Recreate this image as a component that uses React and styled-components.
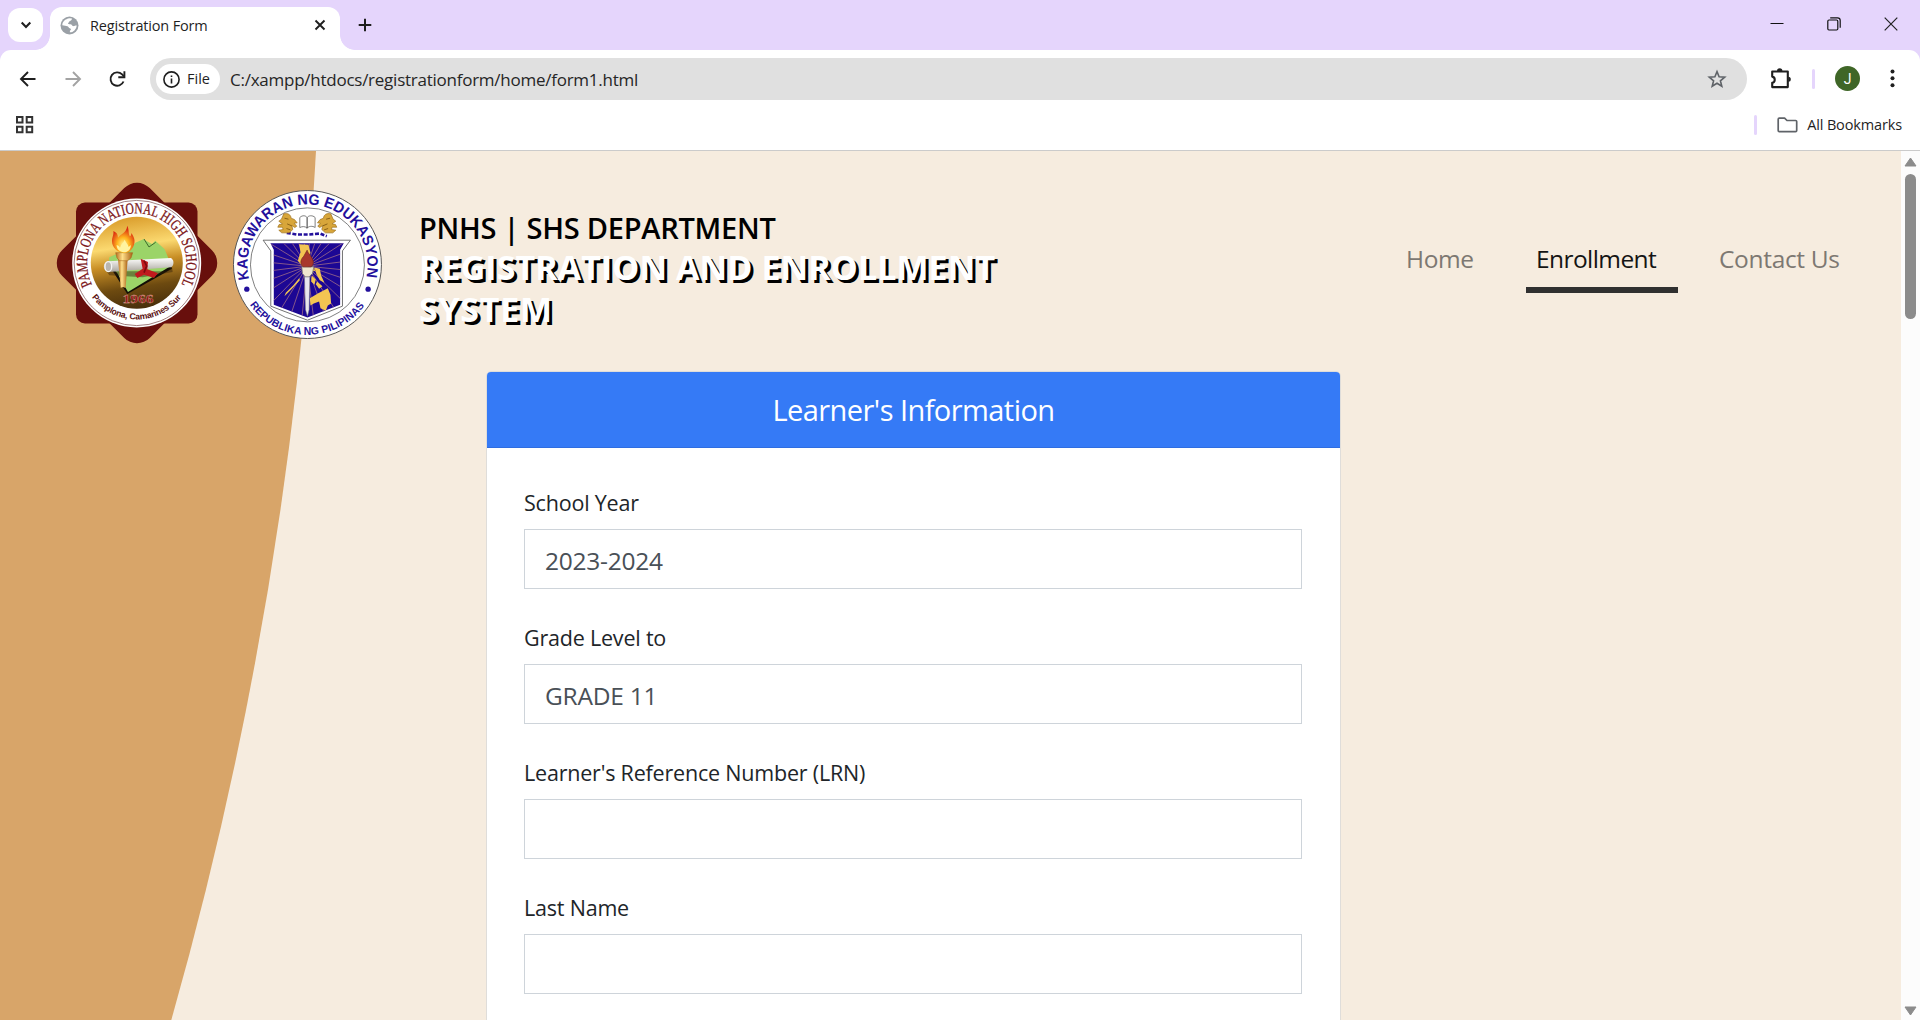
import React from "react";
import styled, { createGlobalStyle } from "styled-components";

const GlobalStyle = createGlobalStyle`
  *, *::before, *::after { box-sizing: border-box; }
  body {
    margin: 0;
    background: #fff;
    overflow: hidden;
    font-family: "Open Sans", "Noto Sans", sans-serif;
  }
`;

/* ---------- browser chrome ---------- */

const BrowserWindow = styled.div`
  display: flex;
  flex-direction: column;
  width: 1920px;
  height: 1020px;
  overflow: hidden;
  background: #e5d5fc;
`;

const TabStrip = styled.div`
  display: flex;
  align-items: flex-start;
  height: 50px;
  padding: 7px 0 0 8px;
`;

const TabSearch = styled.button`
  display: flex;
  align-items: center;
  justify-content: center;
  width: 35px;
  height: 34px;
  margin: 1px 7px 0 0;
  padding: 0;
  border: 0;
  border-radius: 12px;
  background: #fff;
`;

const Tab = styled.div`
  position: relative;
  display: flex;
  align-items: center;
  width: 290px;
  height: 43px;
  padding: 0 14px 7px 10px;
  border-radius: 12px 12px 0 0;
  background: #fff;

  &::before,
  &::after {
    content: "";
    position: absolute;
    bottom: 0;
    width: 15px;
    height: 15px;
  }
  &::before {
    left: -15px;
    background: radial-gradient(circle at 0 0, transparent 14.5px, #fff 15.2px);
  }
  &::after {
    right: -15px;
    background: radial-gradient(circle at 100% 0, transparent 14.5px, #fff 15.2px);
  }
`;

const TabTitle = styled.span`
  flex: 1;
  margin-left: 11px;
  padding-top: 1px;
  font-size: 14.5px;
  line-height: 20px;
  letter-spacing: -0.17px;
  color: #1f1f1f;
  white-space: nowrap;
`;

const NewTab = styled.div`
  display: flex;
  margin: 11px 0 0 18px;
`;

const WindowControls = styled.div`
  display: flex;
  align-items: center;
  gap: 43px;
  margin: 10px 22px 0 auto;
`;

const Toolbar = styled.div`
  display: flex;
  align-items: center;
  height: 58px;
  padding: 0 25px 0 18px;
  border-radius: 11px 11px 0 0;
  background: #fff;
`;

const NavButtons = styled.div`
  display: flex;
  align-items: center;
  gap: 25px;
  width: 132px;
  padding-bottom: 1px;
`;

const AddressBar = styled.div`
  display: flex;
  align-items: center;
  width: 1597px;
  height: 42px;
  padding: 0 20px 0 6px;
  border-radius: 21px;
  background: #e0e0e0;
`;

const SchemeChip = styled.div`
  display: flex;
  align-items: center;
  gap: 7px;
  width: 64px;
  height: 30px;
  padding-left: 7px;
  border-radius: 15px;
  background: #fff;
  font-size: 14.5px;
  font-weight: 500;
  line-height: 20px;
  color: #1f1f1f;
`;

const Url = styled.span`
  flex: 1;
  margin-left: 10px;
  padding-top: 1px;
  font-size: 17px;
  line-height: 24px;
  letter-spacing: -0.25px;
  color: #262626;
`;

const ToolbarEnd = styled.div`
  display: flex;
  align-items: center;
  gap: 20px;
  margin-left: auto;
  padding-bottom: 1px;
`;

const Divider = styled.span`
  width: 3px;
  height: 20px;
  border-radius: 2px;
  background: #e5d5fc;
`;

const Avatar = styled.span`
  display: flex;
  align-items: center;
  justify-content: center;
  width: 25px;
  height: 25px;
  margin-right: 10px;
  border-radius: 50%;
  background: #3f6627;
  color: #fff;
  font: 14px Roboto, "Open Sans", sans-serif;
`;

const BookmarksBar = styled.div`
  display: flex;
  align-items: center;
  height: 43px;
  padding: 0 18px 9px 15px;
  border-bottom: 1px solid #cbcbcb;
  background: #fff;
`;

const AllBookmarks = styled.div`
  display: flex;
  align-items: center;
  gap: 9px;
  margin-left: auto;
  font-size: 14.5px;
  line-height: 20px;
  letter-spacing: -0.14px;
  color: #1f1f1f;

  svg { margin-left: 11px; }
`;

/* ---------- page ---------- */

const Viewport = styled.div`
  display: flex;
  flex: 1;
  min-height: 0;
`;

const Page = styled.div`
  position: relative;
  flex: 1;
  overflow: hidden;
  background: #f6ecdf;
`;

const Backdrop = styled.svg`
  position: absolute;
  top: 0;
  left: 0;
`;

const Header = styled.header`
  position: relative;
  display: flex;
  align-items: flex-start;
  height: 220px;
  padding: 32px 39px 0 57px;
`;

const Seal = styled.svg`
  flex: none;
  margin: 7px 0 0 16px;
  overflow: visible;
`;

const Badge = styled.svg`
  flex: none;
  overflow: visible;
`;

const Titles = styled.div`
  width: 620px;
  margin: 27px 0 0 37px;
`;

const Department = styled.div`
  font-size: 29px;
  font-weight: 600;
  line-height: 36px;
  letter-spacing: -0.25px;
  color: #000;
`;

const SystemName = styled.div`
  font-size: 34px;
  font-weight: 700;
  line-height: 42px;
  letter-spacing: 0.07px;
  color: #fff;
  text-shadow: 3px 3px 0 #000;
`;

const LastWord = styled.span`
  letter-spacing: 0.7px;
`;

const Nav = styled.nav`
  display: flex;
  gap: 30px;
  margin: 56px 0 0 auto;
`;

const NavLink = styled.a`
  width: ${(p) => p.$width}px;
  padding: 0 0 8px ${(p) => (p.$active ? 10 : 11)}px;
  border-bottom: 6px solid ${(p) => (p.$active ? "#303030" : "transparent")};
  font-size: 24.5px;
  line-height: 40px;
  letter-spacing: ${(p) => p.$tracking}px;
  color: ${(p) => (p.$active ? "#141414" : "#7d7872")};
  white-space: nowrap;
`;

const Card = styled.section`
  position: relative;
  width: 855px;
  height: 900px;
  margin-left: 486px;
  border: 1px solid #dfddda;
  border-radius: 5px;
  background: #fff;
`;

const CardHeader = styled.h1`
  margin: 0;
  height: 76px;
  border-bottom: 1px solid #2f6de0;
  border-radius: 4px 4px 0 0;
  background: #357af6;
  color: #fff;
  font-size: 29px;
  font-weight: 400;
  line-height: 75px;
  letter-spacing: -0.56px;
  text-align: center;
`;

const Fields = styled.form`
  display: flex;
  flex-direction: column;
  gap: 33px;
  padding: 39px 38px 0 37px;
`;

const Field = styled.label`
  display: flex;
  flex-direction: column;
  gap: 10px;
  font-size: 21.5px;
  line-height: 32px;
  letter-spacing: -0.2px;
  color: #212529;
`;

const Input = styled.input`
  height: 60px;
  padding: 3px 20px 0;
  border: 1px solid #ced4da;
  border-radius: 0;
  background: #fff;
  font: 24.5px "Open Sans", "Noto Sans", sans-serif;
  letter-spacing: -0.25px;
  color: #495057;
  outline: none;
`;

const ScrollTrack = styled.div`
  display: flex;
  flex-direction: column;
  align-items: center;
  width: 19px;
  padding: 6px 0 4px;
  background: #fcfcfc;
`;

const ScrollThumb = styled.div`
  width: 11px;
  height: 145px;
  margin: 7px 0 auto;
  border-radius: 6px;
  background: #8b8b8b;
`;

/* ---------- icons ---------- */

const Stroke = ({ size = 20, w = 2, color = "#1f1f1f", children, box = 20 }) => (
  <svg width={size} height={size} viewBox={`0 0 ${box} ${box}`} fill="none" stroke={color} strokeWidth={w}>
    {children}
  </svg>
);

const ChevronIcon = () => (
  <Stroke size={12} box={12} w={2.1}><path d="M1.7 3.6 6 7.9l4.3-4.3" /></Stroke>
);
const GlobeIcon = () => (
  <svg width="19" height="19" viewBox="0 0 19 19">
    <circle cx="9.5" cy="9.5" r="9" fill="#9aa0a6" />
    <path fill="#fff" d="M9.600 2.200 12 2.500c-.2 1.600-1 2.200-2.300 2.500-.6.7-.4 1.500-1.600 2-.3 1.200.8 1.300 2.400 1.300 1.400.2 1.300 1.500 2.600 1.800 1.300.3 1.800-.6 3.600-.5-.2 2-.9 3.600-2.300 4.800-1.300 1.300-2.800 1.800-4.500 1.900v-1.600c1.600-.5 1.300-2-.1-2.400-1.200-.3-1.100-1.800-2.300-2.100C5.900 9.900 4.500 9.500 2.300 9.200 2.300 5.900 5 2.800 9.600 2.200z" />
  </svg>
);
const CloseIcon = () => (
  <Stroke size={12} box={12} w={1.9}><path d="m1.500 1.500 9 9m0-9-9 9" /></Stroke>
);
const PlusIcon = () => (
  <Stroke size={14} box={14} w={2}><path d="M7 .7v12.600M.7 7h12.600" /></Stroke>
);
const ArrowIcon = ({ color, flip }) => (
  <Stroke color={color} w={1.9}>
    <path d={flip ? "M2.500 10h14M10 3l7 7-7 7" : "M17.500 10h-14M10 3l-7 7 7 7"} />
  </Stroke>
);
const ReloadIcon = () => (
  <Stroke w={1.9}>
    <path d="M15.500 12.500A6.700 6.700 0 1 1 14.100 5.400L16 7.400" />
    <path d="M16.400 2.200v6.100h-6.100" />
  </Stroke>
);
const InfoIcon = () => (
  <svg width="17" height="17" viewBox="0 0 17 17" fill="none" stroke="#1f1f1f" strokeWidth="1.600">
    <circle cx="8.500" cy="8.500" r="7.600" />
    <path d="M8.500 7.500v5M8.500 4.400v1.700" />
  </svg>
);
const StarIcon = () => (
  <Stroke color="#5f6368" w={1.600}>
    <path d="m10 2.600 2.100 5.200 5.600.4-4.300 3.600 1.400 5.500L10 14.300l-4.800 3 1.400-5.500-4.300-3.600 5.600-.4z" />
  </Stroke>
);
const PuzzleIcon = () => (
  <svg width="22" height="21" viewBox="0 0 22 21">
    <path d="M2.200 3.500h15.600v15.600H2.200v-4.300c3.400-.5 3.400-5.700 0-6.200z" fill="none" stroke="#1f1f1f" strokeWidth="2.100" strokeLinejoin="round" />
    <path d="M7 3a2.700 2.700 0 0 1 5.400 0zM18.300 8.800a2.500 2.500 0 0 1 0 5z" fill="#1f1f1f" />
  </svg>
);
const MenuIcon = () => (
  <svg width="5" height="19" viewBox="0 0 5 19" fill="#1f1f1f">
    <circle cx="2.500" cy="2.500" r="2" /><circle cx="2.500" cy="9.300" r="2" /><circle cx="2.500" cy="16.200" r="2" />
  </svg>
);
const GridIcon = () => (
  <svg width="19" height="19" viewBox="0 0 19 19" fill="none" stroke="#333" strokeWidth="2">
    <path d="M2 2h5.500v5.500H2zM11.700 2h5.500v5.500h-5.500zM2 11.700h5.500v5.500H2zM11.700 11.700h5.500v5.500h-5.500z" />
  </svg>
);
const FolderIcon = () => (
  <svg width="21" height="16" viewBox="0 0 21 16" fill="none" stroke="#5f6368" strokeWidth="1.700" strokeLinejoin="round">
    <path d="M1.200 2.200c0-.7.4-1.100 1.100-1.100h5.300l2.400 2.400h8.600c.7 0 1.100.4 1.100 1.100v9c0 .7-.4 1.100-1.100 1.100H2.300c-.7 0-1.100-.4-1.100-1.100z" />
  </svg>
);

/* ---------- emblems ---------- */

function SchoolBadge() {
  return (
    <Badge width="160" height="160" viewBox="0 0 160 160">
      <defs>
        <linearGradient id="gold" x1="0.300" y1="0" x2="0.450" y2="1">
          <stop offset="0" stopColor="#d99a28" />
          <stop offset="0.330" stopColor="#fbd970" />
          <stop offset="0.520" stopColor="#c98f26" />
          <stop offset="0.780" stopColor="#6d4a10" />
          <stop offset="1" stopColor="#4a300c" />
        </linearGradient>
        <linearGradient id="torch" x1="0" x2="1" y1="0" y2="0">
          <stop offset="0" stopColor="#b66b1c" />
          <stop offset="0.400" stopColor="#ffe08a" />
          <stop offset="1" stopColor="#a95f14" />
        </linearGradient>
        <linearGradient id="paper" x1="0" x2="0" y1="0" y2="1">
          <stop offset="0" stopColor="#fff" />
          <stop offset="1" stopColor="#a9a59c" />
        </linearGradient>
        <radialGradient id="flame" cx="0.500" cy="0.700" r="0.600">
          <stop offset="0" stopColor="#fff6a0" />
          <stop offset="0.450" stopColor="#ffb51e" />
          <stop offset="1" stopColor="#dc2a10" />
        </radialGradient>
        <path id="badgeTop" d="M35.500 102.500A49.600 49.600 0 1 1 124 102.300" />
        <path id="badgeBottom" d="M34.300 113.400A56.500 56.500 0 0 0 126.300 112.200" />
      </defs>
      <rect x="18" y="18" width="124" height="124" rx="18" transform="rotate(45 80 80)" fill="#680f0c" />
      <rect x="19" y="19.500" width="121.500" height="121" rx="9" fill="#680f0c" />
      <circle cx="79.700" cy="80" r="64.500" fill="#fff" />
      <circle cx="79.700" cy="80" r="62.600" fill="none" stroke="#7a4a4a" strokeWidth="0.700" />
      <circle cx="79.800" cy="79.800" r="46" fill="url(#gold)" />
      <g transform="translate(-17 -13) scale(0.3333)">
        <path d="M210 290 262 372 396 296 390 282z" fill="#120e06" />
        <path d="M206 282 208 262l30-14 26-6 22-24 24-10 26 14 10-10 28 26 10 24 12 24-132 80-32-56z" fill="#9bd468" />
        <path d="m312 207 15 24 20-14" fill="none" stroke="#3f6a2c" strokeWidth="3" />
        <path d="M200 304h180l16-14 2 16-90 16-100-6z" fill="#2e2008" opacity="0.450" />
        <path d="m205 274 188-10c10 6 10 22 0 28l-188 14c-18-2-18-30 0-32z" fill="url(#paper)" />
        <ellipse cx="205" cy="290" rx="10" ry="15" fill="#b9b6b0" stroke="#f4f4f2" strokeWidth="4" />
        <path d="m302 266 22 10-2 22 32 12-12 14-30-10-20 10-8-12 24-16z" fill="#c01a1e" />
        <path d="m312 272 8 16-8 20" fill="none" stroke="#7d0a10" strokeWidth="5" />
        <path d="M234 266h29l-6 88-8-3-7 2z" fill="url(#torch)" />
        <path d="M227 248h51l-5 16-10 8h-24l-8-8z" fill="url(#torch)" stroke="#a4611b" strokeWidth="1.500" />
        <path d="M252 249c-20-2-36-16-36-36 0-12 6-18 4-30 10 4 14 10 14 20 8-12 24-12 28-36 6 12 2 22 8 32 3-2 4-6 4-10 12 16 12 30 4 44-6 10-14 16-26 16z" fill="url(#flame)" />
        <path d="M252 247c-14-2-22-10-22-22 6 2 8 4 10 8 2-10 10-14 14-24 4 10 10 12 12 22l6-6c2 12-8 22-20 22z" fill="#fff3a0" />
      </g>
      <text fill="#7c1518" stroke="#7c1518" strokeWidth="0.300" fontFamily="Liberation Serif, serif" fontSize="15.500">
        <textPath href="#badgeTop" startOffset="1" textLength="200" lengthAdjust="spacingAndGlyphs">PAMPLONA NATIONAL HIGH SCHOOL</textPath>
      </text>
      <text fill="#5b1010" fontFamily="Liberation Sans, sans-serif" fontWeight="700" fontSize="8.700">
        <textPath href="#badgeBottom" startOffset="1" textLength="103" lengthAdjust="spacing">Pamplona, Camarines Sur</textPath>
      </text>
      <text x="81" y="120" textAnchor="middle" fill="#8e1316" stroke="#e5b0a0" strokeWidth="0.300" fontFamily="Liberation Serif, serif" fontWeight="700" fontSize="12.500" textLength="31" lengthAdjust="spacingAndGlyphs">1966</text>
    </Badge>
  );
}

const RAYS = Array.from({ length: 28 }, (_, i) => {
  const angle = (i / 28) * Math.PI * 2 + 0.1;
  return { x: 262 + Math.cos(angle) * 230, y: 288 + Math.sin(angle) * 230 };
});

function EducationSeal() {
  return (
    <Seal width="149" height="149" viewBox="0 0 149 149">
      <defs>
        <clipPath id="shieldClip"><path d="M152 219h220l-11 20v165l-98 38-101-38V239z" /></clipPath>
        <path id="sealTop" d="M89 329A180 180 0 1 1 437 329" />
        <path id="sealBottom" d="M88 400A210 210 0 0 0 438 400" />
      </defs>
      <g transform="translate(-13.200 -19.800) scale(0.3333)">
        <circle cx="263" cy="283" r="222" fill="#fff" stroke="#555" strokeWidth="3" />
        <circle cx="263" cy="284" r="171" fill="#fff" stroke="#666" strokeWidth="2.500" />
        <text fill="#23109c" fontFamily="Liberation Sans, sans-serif" fontWeight="700" fontSize="45">
          <textPath href="#sealTop" startOffset="2" textLength="648" lengthAdjust="spacingAndGlyphs">KAGAWARAN NG EDUKASYON</textPath>
        </text>
        <text fill="#23109c" fontFamily="Liberation Sans, sans-serif" fontWeight="700" fontSize="31">
          <textPath href="#sealBottom" startOffset="4" textLength="402" lengthAdjust="spacing">REPUBLIKA NG PILIPINAS</textPath>
        </text>
        <circle cx="81" cy="357" r="8" fill="#23109c" />
        <circle cx="445" cy="357" r="8" fill="#23109c" />

        <path d="M130 210h262l-24 32v166l-105 42-110-42V242z" fill="#fff" stroke="#555" strokeWidth="2.500" />
        <path d="M152 219h220l-11 20v165l-98 38-101-38V239z" fill="#1c0794" />
        <g clipPath="url(#shieldClip)" stroke="#84578a" strokeWidth="3">
          {RAYS.map((ray) => <path key={ray.x + ray.y} d={`M262 288 ${ray.x} ${ray.y}`} />)}
        </g>
        <g fill="#f3c552">
          <path d="m238 222 28 2 6 24-10 30 6 20 14-8 4 12-16 4-22-18-14-16 8-26z" />
          <path d="m240 330-22 24-24 24 4-10 22-22 18-22z" />
          <path d="m284 292 16 4 4 20 10 22-14-8-10-18zM276 316l12 12-4 16-10-10zM292 334l16 14-10 8-10-14z" />
          <path d="m270 384 24-14 30-16 8 20 2 26-10 6-6 16-16-8-4-20-16 6-10 6z" />
        </g>
        <path d="M254 318h16l-2 100-5 20-6-20z" fill="#e8e6ee" stroke="#777" strokeWidth="1.500" />
        <path d="M246 290h36l-4 20-10 10h-12l-8-10z" fill="#efe6cf" stroke="#666" strokeWidth="2" />
        <path d="M250 290c-12-12-6-24 2-32l10-18c2 10 16 20 18 32 2 10-2 14-6 18z" fill="#a8372c" stroke="#6f211c" strokeWidth="2" />

        <path d="m201 188 30 5 36 0 34-3 20 8" fill="none" stroke="#23109c" strokeWidth="8" strokeDasharray="12 5" />
        <path d="M240 142c8-8 18-6 22 0 4-6 16-8 24 0v30c-8-6-20-4-24 2-6-6-14-6-22-2z" fill="#fff" stroke="#666" strokeWidth="2.500" />
        <path d="M262 142v32" stroke="#333" strokeWidth="3" />
        <g id="lion">
          <path d="M192 131c12-3 21 2 22 13l10 4 8 10-9 1 8 9-6 4-9-6 3 12-11 10-22 0-9-8 13-2-2-7-14 0 4-8 10-2-11-8 8-6z" fill="#d8a63a" stroke="#9a6c19" strokeWidth="2" />
          <path d="m194 144 12 3m-4 14 14 6m-16 8 12 4" stroke="#7b5410" strokeWidth="2.500" fill="none" />
        </g>
        <use href="#lion" transform="translate(525 0) scale(-1 1)" />
      </g>
    </Seal>
  );
}

const FIELDS = [
  { label: "School Year", value: "2023-2024" },
  { label: "Grade Level to", value: "GRADE 11" },
  { label: "Learner's Reference Number (LRN)", value: "" },
  { label: "Last Name", value: "" },
];

export default function App() {
  return (
    <>
      <GlobalStyle />
      <BrowserWindow>
        <TabStrip>
          <TabSearch><ChevronIcon /></TabSearch>
          <Tab>
            <GlobeIcon />
            <TabTitle>Registration Form</TabTitle>
            <CloseIcon />
          </Tab>
          <NewTab><PlusIcon /></NewTab>
          <WindowControls>
            <svg width="14" height="14" viewBox="0 0 14 14"><path d="M.5 6.500h13" stroke="#111" /></svg>
            <svg width="14" height="14" viewBox="0 0 14 14" fill="none" stroke="#111" strokeWidth="1.200">
              <path d="M.8 4.200q0-1.200 1.200-1.200h7.600q1.200 0 1.200 1.200v7.600q0 1.200-1.200 1.200H2q-1.200 0-1.200-1.200zM3.200.8h7.300q2.700 0 2.700 2.700v7.200" />
            </svg>
            <svg width="14" height="14" viewBox="0 0 14 14"><path d="m.7.700 12.600 12.600m0-12.600L.7 13.300" stroke="#222" strokeWidth="1.200" /></svg>
          </WindowControls>
        </TabStrip>

        <Toolbar>
          <NavButtons>
            <ArrowIcon />
            <ArrowIcon color="#a3a3a3" flip />
            <ReloadIcon />
          </NavButtons>
          <AddressBar>
            <SchemeChip><InfoIcon />File</SchemeChip>
            <Url>C:/xampp/htdocs/registrationform/home/form1.html</Url>
            <StarIcon />
          </AddressBar>
          <ToolbarEnd>
            <PuzzleIcon />
            <Divider />
            <Avatar>J</Avatar>
            <MenuIcon />
          </ToolbarEnd>
        </Toolbar>

        <BookmarksBar>
          <GridIcon />
          <AllBookmarks>
            <Divider />
            <FolderIcon />
            All Bookmarks
          </AllBookmarks>
        </BookmarksBar>

        <Viewport>
          <Page>
            <Backdrop width="330" height="869" viewBox="0 0 330 869">
              <path d="M0 0H316A3950 3950 0 0 1 171.300 869H0z" fill="#d8a569" />
            </Backdrop>
            <Header>
              <SchoolBadge />
              <EducationSeal />
              <Titles>
                <Department>PNHS | SHS DEPARTMENT</Department>
                <SystemName>
                  REGISTRATION AND ENROLLMENT <LastWord>SYSTEM</LastWord>
                </SystemName>
              </Titles>
              <Nav>
                <NavLink $width={101} $tracking={-0.4}>Home</NavLink>
                <NavLink $width={152} $tracking={-0.58} $active>Enrollment</NavLink>
                <NavLink $width={154} $tracking={-0.32}>Contact Us</NavLink>
              </Nav>
            </Header>
            <Card>
              <CardHeader>Learner's Information</CardHeader>
              <Fields>
                {FIELDS.map((field) => (
                  <Field key={field.label}>
                    {field.label}
                    <Input defaultValue={field.value} />
                  </Field>
                ))}
              </Fields>
            </Card>
          </Page>
          <ScrollTrack>
            <svg width="13" height="10" viewBox="0 0 13 10"><path d="M6.500 1 12 9H1z" fill="#8b8b8b" stroke="#8b8b8b" strokeLinejoin="round" /></svg>
            <ScrollThumb />
            <svg width="13" height="10" viewBox="0 0 13 10"><path d="M6.500 9 12 1H1z" fill="#8b8b8b" stroke="#8b8b8b" strokeLinejoin="round" /></svg>
          </ScrollTrack>
        </Viewport>
      </BrowserWindow>
    </>
  );
}
